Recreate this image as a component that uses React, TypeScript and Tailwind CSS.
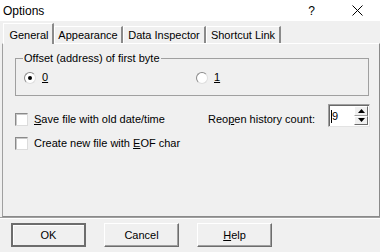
import React from 'react';

const Check = ({ children }: { children: React.ReactNode }) => (
  <div className="flex items-center">
    <span className="h-[13px] w-[13px] border border-t-[#8a8a8a] border-l-[#8a8a8a] border-r-[#dcdcdc] border-b-[#dcdcdc] bg-white shadow-[inset_1px_1px_0_#c8c8c8]" />
    <span className="ml-[6px] leading-[13px]">{children}</span>
  </div>
);

const Radio = ({ checked, children }: { checked?: boolean; children: React.ReactNode }) => (
  <div className="flex items-center">
    <span className="flex h-[12px] w-[12px] items-center justify-center rounded-full border border-t-[#8a8a8a] border-l-[#8a8a8a] border-r-[#dedede] border-b-[#dedede] bg-white">
      {checked && <span className="h-[4px] w-[4px] rounded-full bg-black" />}
    </span>
    <span className="ml-[6px] leading-[13px]">{children}</span>
  </div>
);

const Btn = ({ children, def }: { children: React.ReactNode; def?: boolean }) => (
  <button
    className={
      def
        ? 'flex h-[24px] w-[75px] items-center justify-center border-2 border-[#6d6d6d] bg-[#f0f0f0] shadow-[inset_1px_1px_0_#fff]'
        : 'flex h-[24px] w-[75px] items-center justify-center border border-t-white border-l-white border-r-[#6d6d6d] border-b-[#6d6d6d] bg-[#f0f0f0] shadow-[inset_-1px_-1px_0_#a0a0a0]'
    }
  >
    {children}
  </button>
);

const tabs = [
  { label: 'Appearance', w: 'w-[69px]' },
  { label: 'Data Inspector', w: 'w-[83px]' },
  { label: 'Shortcut Link', w: 'w-[75px]' },
];

export default function App() {
  return (
    <div className="flex h-[252px] w-[380px] flex-col overflow-hidden bg-[#f0f0f0] font-['Liberation_Sans',Arial,sans-serif] text-[11px] text-black">
      {/* title bar */}
      <div className="flex h-[21px] items-center bg-white pl-[3px] text-[12px]">
        <span>Options</span>
        <span className="ml-auto mr-[37px] text-[12px]">?</span>
        <svg width="11" height="11" viewBox="0 0 11 11" className="mr-[17px]">
          <path d="M0.5 0.5 L10.5 10.5 M10.5 0.5 L0.5 10.5" stroke="#000" strokeWidth="1" />
        </svg>
      </div>

      {/* tabs */}
      <div className="flex h-[22px] items-end pl-[3px]">
        <div className="relative z-10 -mb-px flex h-[21px] w-[51px] items-start justify-center border-l border-t border-l-white border-t-white border-r-2 border-r-[#8a8a8a] bg-[#f0f0f0] pt-[3px] pl-[2px]">
          General
        </div>
        {tabs.map((t) => (
          <div
            key={t.label}
            className={`flex h-[17px] ${t.w} items-center justify-center border-l border-t border-l-white border-t-white border-r-2 border-r-[#8a8a8a]`}
          >
            {t.label}
          </div>
        ))}
      </div>

      {/* page */}
      <div className="ml-[2px] h-[174px] w-[378px] border border-l-[#a0a0a0] border-t-white border-r-[#8a8a8a] border-b-[#8a8a8a]">
        <fieldset className="ml-[12px] mt-[8px] w-[354px] border border-[#a0a0a0] pb-[11px]">
          <legend className="ml-[7px] px-[1px] leading-[13px]">Offset (address) of first byte</legend>
          <div className="flex pl-[8px] pt-[6px]">
            <div className="w-[172px]">
              <Radio checked>
                <span className="underline">0</span>
              </Radio>
            </div>
            <Radio>
              <span className="underline">1</span>
            </Radio>
          </div>
        </fieldset>

        <div className="ml-[12px] mt-[8px] flex items-start">
          <div className="mt-[9px]">
            <Check>
              <span className="underline">S</span>ave file with old date/time
            </Check>
          </div>
          <span className="ml-auto mt-[9px] leading-[13px]">
            Reo<span className="underline">p</span>en history count:
          </span>
          <div className="ml-[13px] mr-[9px] flex h-[23px] w-[42px] border border-t-[#a0a0a0] border-l-[#a0a0a0] border-r-[#e3e3e3] border-b-[#e3e3e3] bg-white shadow-[inset_1px_1px_0_#696969]">
            <div className="flex flex-1 items-center pl-[2px] pt-[1px]">
              <span className="h-[13px] w-px bg-black" />
              <span className="leading-[13px]">9</span>
            </div>
            <div className="my-[1px] mr-[1px] flex w-[14px] flex-col">
              <div className="flex flex-1 items-center justify-center border border-t-white border-l-white border-r-[#696969] border-b-[#a0a0a0] bg-[#f0f0f0]">
                <svg width="7" height="4" viewBox="0 0 7 4">
                  <path d="M3.5 0 L7 4 L0 4 Z" fill="#000" />
                </svg>
              </div>
              <div className="flex flex-1 items-center justify-center border border-t-white border-l-white border-r-[#696969] border-b-[#696969] bg-[#f0f0f0]">
                <svg width="7" height="4" viewBox="0 0 7 4">
                  <path d="M0 0 L7 0 L3.5 4 Z" fill="#000" />
                </svg>
              </div>
            </div>
          </div>
        </div>

        <div className="ml-[12px] mt-[10px]">
          <Check>
            Create new file with <span className="underline">E</span>OF char
          </Check>
        </div>
      </div>

      <div className="h-px bg-[#a0a0a0]" />
      <div className="h-px bg-white" />

      <div className="ml-[11px] mt-[4px] flex gap-[18px]">
        <Btn def>OK</Btn>
        <Btn>Cancel</Btn>
        <Btn>
          <span>
            <span className="underline">H</span>elp
          </span>
        </Btn>
      </div>
    </div>
  );
}
